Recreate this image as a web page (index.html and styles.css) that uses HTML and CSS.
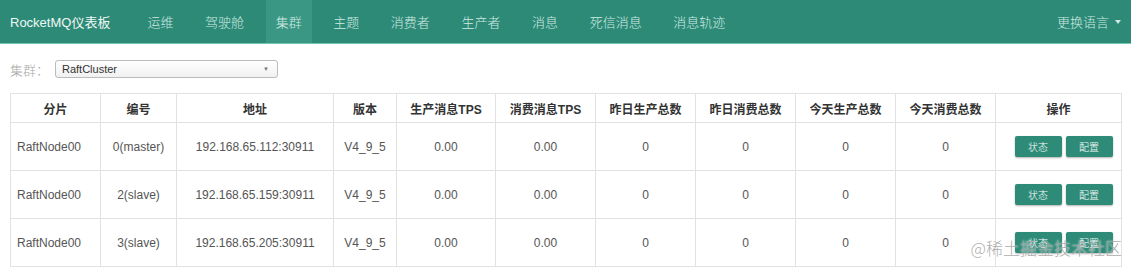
FILE: index.html
```html
<!DOCTYPE html>
<html lang="zh-CN">
<head>
  <meta charset="UTF-8">
  <meta name="viewport" content="width=device-width, initial-scale=1.0">
  <title>RocketMQ仪表板</title>
  <link rel="stylesheet" href="styles.css">
</head>
<body>
  <nav class="navbar">
    <span class="brand">RocketMQ仪表板</span>
    <ul class="nav">
      <li><a href="#">运维</a></li>
      <li><a href="#">驾驶舱</a></li>
      <li class="active"><a href="#">集群</a></li>
      <li><a href="#">主题</a></li>
      <li><a href="#">消费者</a></li>
      <li><a href="#">生产者</a></li>
      <li><a href="#">消息</a></li>
      <li><a href="#">死信消息</a></li>
      <li><a href="#">消息轨迹</a></li>
    </ul>
    <a href="#" class="lang">更换语言 <span class="caret"></span></a>
  </nav>

  <div class="page">
    <div class="filter">
      <label>集群：</label>
      <div class="select">
        <span>RaftCluster</span>
        <span class="select-arrow">▼</span>
      </div>
    </div>

    <table class="grid">
      <colgroup>
        <col class="c-shard">
        <col class="c-id">
        <col class="c-addr">
        <col class="c-ver">
        <col class="c-tps">
        <col class="c-num">
        <col class="c-num">
        <col class="c-num">
        <col class="c-num">
        <col class="c-num">
        <col>
      </colgroup>
      <thead>
        <tr>
          <th>分片</th>
          <th>编号</th>
          <th>地址</th>
          <th>版本</th>
          <th>生产消息TPS</th>
          <th>消费消息TPS</th>
          <th>昨日生产总数</th>
          <th>昨日消费总数</th>
          <th>今天生产总数</th>
          <th>今天消费总数</th>
          <th>操作</th>
        </tr>
      </thead>
      <tbody id="rows"></tbody>
    </table>
  </div>

  <div class="watermark">@稀土掘金技术社区</div>

  <script>
    const brokers = [
      { shard: "RaftNode00", id: "0(master)", addr: "192.168.65.112:30911" },
      { shard: "RaftNode00", id: "2(slave)", addr: "192.168.65.159:30911" },
      { shard: "RaftNode00", id: "3(slave)", addr: "192.168.65.205:30911" }
    ];

    let html = "";
    brokers.forEach(b => {
      html += '<tr>' +
        `<td class="left">${b.shard}</td>` +
        `<td>${b.id}</td>` +
        `<td>${b.addr}</td>` +
        '<td>V4_9_5</td>' +
        '<td>0.00</td><td>0.00</td>' +
        '<td>0</td><td>0</td><td>0</td><td>0</td>' +
        '<td><button class="btn">状态</button><button class="btn">配置</button></td>' +
        '</tr>';
    });
    document.getElementById("rows").innerHTML = html;
  </script>
</body>
</html>
```

FILE: styles.css
```css
body {
  margin: 0;
  font-family: "Liberation Sans", "Noto Sans CJK SC", sans-serif;
  font-size: 12px;
  color: #555;
  background: #fff;
  position: relative;
  height: 270px;
  overflow: hidden;
}
.navbar {
  display: flex;
  align-items: stretch;
  height: 43px;
  background: #2d8a77;
  border-bottom: 1px solid #74c9b6;
  padding: 0 10px;
}
.brand {
  display: flex;
  align-items: center;
  font-size: 13px;
  color: #eef8f5;
  margin-right: 27px;
}
.nav {
  display: flex;
  list-style: none;
  margin: 0;
  padding: 0;
  gap: 11.6px;
  flex: 1;
}
.nav li {
  display: flex;
}
.nav a {
  display: flex;
  align-items: center;
  padding: 0 10px;
  color: #cfeae3;
  text-decoration: none;
  font-size: 13px;
  font-weight: 300;
}
.nav li.active a {
  background: #3a9784;
}
.lang {
  display: flex;
  align-items: center;
  color: #cfeae3;
  text-decoration: none;
  font-size: 13px;
  font-weight: 300;
}
.caret {
  display: inline-block;
  margin-left: 6px;
  border-top: 4px solid #cfeae3;
  border-left: 3px solid transparent;
  border-right: 3px solid transparent;
}
.page {
  padding: 0 9px 0 10px;
}
.filter {
  display: flex;
  align-items: center;
  height: 48px;
  padding-top: 1px;
}
.filter label {
  color: #aaa;
  width: 45px;
  font-size: 13px;
  font-weight: 300;
}
.select {
  display: flex;
  align-items: center;
  justify-content: space-between;
  box-sizing: border-box;
  width: 223px;
  height: 18px;
  padding: 0 8px 0 6px;
  border: 1px solid #bbb;
  border-radius: 3px;
  background: linear-gradient(#fff, #f1f1f1);
  font-size: 11px;
  color: #333;
}
.select-arrow {
  font-size: 6px;
  color: #777;
}
.grid {
  width: 100%;
  border-collapse: collapse;
  table-layout: fixed;
}
.c-shard { width: 90px; }
.c-id { width: 76px; }
.c-addr { width: 157px; }
.c-ver { width: 63px; }
.c-tps { width: 99px; }
.c-num { width: 100px; }
.grid th,
.grid td {
  border: 1px solid #e2e2e2;
  text-align: center;
  padding: 0;
}
.grid th {
  height: 28px;
  font-size: 12px;
  font-weight: bold;
  color: #333;
}
.grid td {
  height: 47px;
  font-size: 12px;
  color: #555;
}
.grid td.left {
  text-align: left;
  padding-left: 6px;
}
.btn {
  width: 47px;
  height: 21px;
  margin: 0 2px;
  padding: 0;
  border: none;
  border-radius: 2px;
  background: #2e8b78;
  color: #fff;
  font-family: "Liberation Sans", "Noto Sans CJK SC", sans-serif;
  font-size: 10px;
  font-weight: 300;
  box-shadow: 0 1px 2px rgba(0, 0, 0, 0.3);
  position: relative;
  left: 5px;
}
.watermark {
  position: absolute;
  right: 9px;
  bottom: 10px;
  font-family: "Noto Sans CJK SC", sans-serif;
  font-weight: 300;
  font-size: 17px;
  color: rgba(150, 150, 150, 0.8);
  text-shadow: 0 0 2px #fff;
}
```
